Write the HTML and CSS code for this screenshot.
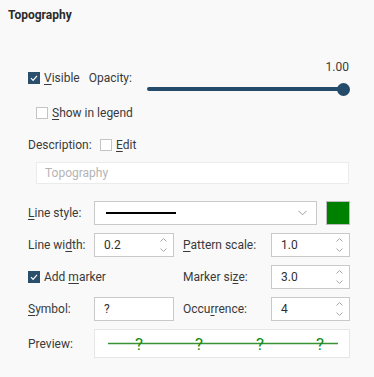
FILE: index.html
```html
<!DOCTYPE html>
<html>
<head>
<meta charset="utf-8">
<link rel="stylesheet" href="styles.css">
</head>
<body>
<div class="panel">
  <div class="title">Topography</div>

  <div class="opacity-row">
    <div class="opacity-left">
      <span class="cb checked"><svg width="12" height="12" viewBox="0 0 12 12"><path d="M3 6.2 L5.1 8.3 L9 3.8" fill="none" stroke="#fff" stroke-width="1.2"/></svg></span>
      <span class="cb-label"><u>V</u>isible</span>
      <span class="op-label">Opacity:</span>
    </div>
    <div class="slider">
      <div class="slider-value">1.00</div>
      <div class="slider-track"><span class="thumb"></span></div>
    </div>
  </div>

  <div class="legend-row">
    <span class="cb"></span>
    <span class="cb-label"><u>S</u>how in legend</span>
  </div>

  <div class="desc-row">
    <span class="desc-label">Description:</span>
    <span class="cb"></span>
    <span class="cb-label"><u>E</u>dit</span>
  </div>

  <div class="desc-field">Topography</div>

  <div class="form">
    <span class="label"><u>L</u>ine style:</span>
    <div class="combo span2">
      <span class="line-sample"></span>
      <svg class="chev" width="9" height="6" viewBox="0 0 9 6"><path d="M0.5 0.8 L4.5 4.8 L8.5 0.8" fill="none" stroke="#9a9a9a" stroke-width="1"/></svg>
    </div>
    <div class="swatch-cell"><span class="swatch"></span></div>

    <span class="label">Line wi<u>d</u>th:</span>
    <div class="spin"><span>0.2</span><span class="arrows"><svg width="7" height="16" viewBox="0 0 7 16"><path d="M0.5 4.5 L3.5 1.5 L6.5 4.5 M0.5 11.5 L3.5 14.5 L6.5 11.5" fill="none" stroke="#a8a8a8" stroke-width="1"/></svg></span></div>
    <span class="label label2"><u>P</u>attern scale:</span>
    <div class="spin"><span>1.0</span><span class="arrows"><svg width="7" height="16" viewBox="0 0 7 16"><path d="M0.5 4.5 L3.5 1.5 L6.5 4.5 M0.5 11.5 L3.5 14.5 L6.5 11.5" fill="none" stroke="#a8a8a8" stroke-width="1"/></svg></span></div>

    <div class="check-cell span2">
      <span class="cb checked"><svg width="12" height="12" viewBox="0 0 12 12"><path d="M3 6.2 L5.1 8.3 L9 3.8" fill="none" stroke="#fff" stroke-width="1.2"/></svg></span>
      <span class="cb-label">Add <u>m</u>arker</span>
    </div>
    <span class="label label2">Marker si<u>z</u>e:</span>
    <div class="spin"><span>3.0</span><span class="arrows"><svg width="7" height="16" viewBox="0 0 7 16"><path d="M0.5 4.5 L3.5 1.5 L6.5 4.5 M0.5 11.5 L3.5 14.5 L6.5 11.5" fill="none" stroke="#a8a8a8" stroke-width="1"/></svg></span></div>

    <span class="label"><u>S</u>ymbol:</span>
    <div class="field"><span>?</span></div>
    <span class="label label2">Occu<u>r</u>rence:</span>
    <div class="spin"><span>4</span><span class="arrows"><svg width="7" height="16" viewBox="0 0 7 16"><path d="M0.5 4.5 L3.5 1.5 L6.5 4.5 M0.5 11.5 L3.5 14.5 L6.5 11.5" fill="none" stroke="#a8a8a8" stroke-width="1"/></svg></span></div>

    <span class="label">Preview:</span>
    <div class="preview span3">
      <svg width="254" height="27" viewBox="0 0 254 27">
        <line x1="13" y1="13.5" x2="243" y2="13.5" stroke="#3b9235" stroke-width="1.3"/>
        <text x="44" y="20" class="mark">?</text>
        <text x="104" y="20" class="mark">?</text>
        <text x="165" y="20" class="mark">?</text>
        <text x="225" y="20" class="mark">?</text>
      </svg>
    </div>
  </div>
</div>
</body>
</html>
```

FILE: styles.css
```css
html, body {
  margin: 0;
  padding: 0;
  background: #f9f9f9;
}
body {
  font-family: Roboto, "Noto Sans", sans-serif;
  font-size: 12px;
  color: #3a3a3a;
}
u { text-decoration: underline; text-underline-offset: 2px; }
.panel {
  width: 374px;
  height: 377px;
  box-sizing: border-box;
}
.title {
  font-weight: bold;
  color: #2b2b2b;
  padding: 8px 0 0 8px;
  line-height: 14px;
}
.opacity-row {
  display: flex;
  align-items: center;
  margin: 38px 0 0 28px;
  width: 322px;
  height: 36px;
}
.opacity-left {
  display: flex;
  align-items: center;
  width: 119px;
}
.cb {
  display: inline-flex;
  width: 12px;
  height: 12px;
  box-sizing: border-box;
  border: 1px solid #c4c4c4;
  background: #fff;
  flex: none;
}
.cb.checked {
  border: none;
  background: #2a4f6d;
}
.cb-label {
  margin-left: 4px;
  line-height: 14px;
}
.op-label {
  margin-left: 9px;
}
.slider {
  flex: 1;
  display: flex;
  flex-direction: column;
  height: 36px;
}
.slider-value {
  text-align: right;
  line-height: 12px;
  margin-top: 1px;
  padding-right: 1px;
}
.slider-track {
  position: relative;
  margin-top: 14px;
  height: 4px;
  width: 196px;
  background: #244b69;
  border-radius: 2px;
}
.thumb {
  position: absolute;
  right: -6.5px;
  top: -4.5px;
  width: 13px;
  height: 13px;
  border-radius: 50%;
  background: #244b69;
}
.legend-row {
  display: flex;
  align-items: center;
  margin: 11px 0 0 36px;
  height: 12px;
}
.desc-row {
  display: flex;
  align-items: center;
  margin: 20px 0 0 28px;
  height: 12px;
}
.desc-label {
  width: 72px;
}
.desc-field {
  margin: 11px 0 0 36px;
  width: 313px;
  height: 22px;
  box-sizing: border-box;
  border: 1px solid #ebebeb;
  background: #fff;
  color: #b4b4b4;
  padding-left: 8px;
  line-height: 20px;
}
.form {
  display: grid;
  grid-template-columns: 66px 80px 97px 79px;
  grid-template-rows: 24px 24px 24px 24px 29px;
  row-gap: 8px;
  margin: 17px 0 0 28px;
  align-items: center;
}
.span2 { grid-column: span 2; }
.span3 { grid-column: span 3; }
.label2 { padding-left: 9px; }
.combo {
  height: 24px;
  box-sizing: border-box;
  border: 1px solid #c9c9c9;
  background: #fff;
  display: flex;
  align-items: center;
  width: 223px;
  padding: 0 9px 0 11px;
}
.line-sample {
  width: 70px;
  height: 2px;
  background: #000;
}
.chev { margin-left: auto; }
.swatch-cell {
  display: flex;
  justify-content: flex-end;
}
.swatch {
  width: 24px;
  height: 24px;
  box-sizing: border-box;
  border: 1px solid #bdbdbd;
  background: #008000;
}
.spin, .field {
  height: 24px;
  box-sizing: border-box;
  border: 1px solid #c9c9c9;
  background: #fff;
  display: flex;
  align-items: center;
  padding: 0 6px 0 9px;
  color: #2f2f2f;
}
.arrows {
  margin-left: auto;
  display: flex;
}
.check-cell {
  display: flex;
  align-items: center;
}
.preview {
  height: 29px;
  box-sizing: border-box;
  border: 1px solid #e6e6e6;
  background: #fff;
  display: flex;
  align-items: center;
}
.preview svg { display: block; }
.mark {
  font-family: Roboto, sans-serif;
  font-size: 17px;
  fill: #138c13;
  text-anchor: middle;
}
```
